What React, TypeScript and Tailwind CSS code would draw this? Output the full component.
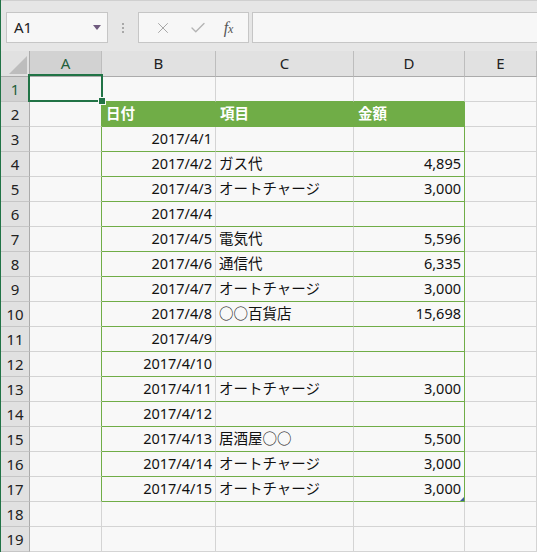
import { X, Check } from 'lucide-react'

const cols = ['A', 'B', 'C', 'D', 'E']

const rows: [string, string, string][] = [
  ['2017/4/1', '', ''],
  ['2017/4/2', 'ガス代', '4,895'],
  ['2017/4/3', 'オートチャージ', '3,000'],
  ['2017/4/4', '', ''],
  ['2017/4/5', '電気代', '5,596'],
  ['2017/4/6', '通信代', '6,335'],
  ['2017/4/7', 'オートチャージ', '3,000'],
  ['2017/4/8', '○○百貨店', '15,698'],
  ['2017/4/9', '', ''],
  ['2017/4/10', '', ''],
  ['2017/4/11', 'オートチャージ', '3,000'],
  ['2017/4/12', '', ''],
  ['2017/4/13', '居酒屋○○', '5,500'],
  ['2017/4/14', 'オートチャージ', '3,000'],
  ['2017/4/15', 'オートチャージ', '3,000'],
]

const font = "font-['Noto_Sans','Noto_Sans_CJK_JP',sans-serif]"

function FormulaBar() {
  return (
    <div className="h-[51px] flex items-start pt-[11px] border-t border-[#d0d0d0]">
      {/* name box */}
      <div className="ml-[5px] w-[102px] h-[31px] border border-[#c6c6c6] bg-[#f7f7f7] flex items-center pl-[7px] pr-[6px]">
        <span className="text-[15px] text-[#222] flex-1">A1</span>
        <svg width="8" height="5" viewBox="0 0 8 5"><path d="M0 0h8L4 5z" fill="#6f5a7e" /></svg>
      </div>
      <div className="w-[30px] h-[31px] flex flex-col items-center justify-center gap-[2px]">
        <span className="w-[2px] h-[2px] bg-[#a8a8a8]" />
        <span className="w-[2px] h-[2px] bg-[#a8a8a8]" />
        <span className="w-[2px] h-[2px] bg-[#a8a8a8]" />
      </div>
      {/* cancel / enter / fx */}
      <div className="w-[111px] h-[31px] border border-[#c6c6c6] bg-[#f7f7f7] flex items-center justify-around px-[6px]">
        <X size={18} strokeWidth={1.3} color="#a6a6a6" />
        <Check size={18} strokeWidth={1.8} color="#b4b4b4" />
        <span className="font-['Liberation_Serif',serif] italic text-[16px] text-[#555] leading-none">
          f<span className="text-[12px]">x</span>
        </span>
      </div>
      <div className="ml-[3px] flex-1 h-[31px] border border-r-0 border-[#c6c6c6] bg-[#f7f7f7]" />
    </div>
  )
}

function cellClass(r: number, c: number) {
  // r: 1-based sheet row, c: 0..4 (A..E)
  const inTable = r >= 2 && r <= 17
  let right = 'border-r-[#d4d4d4]'
  let bottom = 'border-b-[#d4d4d4]'
  let bg = 'bg-[#f8f8f8]'
  if (inTable && c === 0) right = 'border-r-[#70ad47]'
  if (inTable && c === 3) right = 'border-r-[#70ad47]'
  if (r >= 1 && r <= 17 && c >= 1 && c <= 3) bottom = 'border-b-[#70ad47]'
  if (r === 2 && c >= 1 && c <= 3) {
    bg = 'bg-[#70ad47]'
    right = 'border-r-[#70ad47]'
  }
  return `relative h-[25px] border-r border-b ${right} ${bottom} ${bg} flex items-center`
}

export default function App() {
  const sheet: string[][] = []
  for (let r = 1; r <= 19; r++) {
    if (r === 2) sheet.push(['', '日付', '項目', '金額', ''])
    else if (r >= 3 && r <= 17) {
      const [d, item, amt] = rows[r - 3]
      sheet.push(['', d, item, amt, ''])
    } else sheet.push(['', '', '', '', ''])
  }

  return (
    <div className={`relative w-[537px] h-[552px] overflow-hidden bg-[#e6e6e6] border-l border-[#217346] ${font}`}>
      <FormulaBar />

      <div className="grid grid-cols-[29px_72px_114px_138px_111px_1fr]">
        {/* corner */}
        <div className="h-[26px] bg-[#e1e1e1] border-r border-b border-[#ababab] flex items-end justify-end pr-[2px] pb-[2px]">
          <svg width="18" height="18" viewBox="0 0 18 18"><path d="M18 0V18H0z" fill="#bdbdbd" /></svg>
        </div>
        {cols.map((c, i) => (
          <div
            key={c}
            className={`h-[26px] border-r border-b border-r-[#bdbdbd] border-b-[#ababab] flex items-center justify-center text-[15px] ${i === 0 ? 'bg-[#d2d2d2] text-[#1f5f3c]' : 'bg-[#e1e1e1] text-[#222]'}`}
          >
            {c}
          </div>
        ))}

        {sheet.map((cells, ri) => {
          const r = ri + 1
          return [
            <div
              key={`h${r}`}
              className={`h-[25px] border-r border-b border-r-[#ababab] border-b-[#c6c6c6] flex items-center justify-center text-[15px] ${r === 1 ? 'bg-[#d2d2d2] text-[#1f5f3c]' : 'bg-[#e1e1e1] text-[#222]'}`}
            >
              {r}
            </div>,
            ...cells.map((v, c) => (
              <div key={`${r}-${c}`} className={cellClass(r, c)}>
                {r === 2 ? (
                  <span className="pl-[4px] text-[14.5px] font-bold text-white">{v}</span>
                ) : c === 1 || c === 3 ? (
                  <span className="w-full text-right pr-[3px] text-[14.5px] text-[#111]">{v}</span>
                ) : (
                  <span className="pl-[3px] text-[14.5px] text-[#111] whitespace-nowrap">{v}</span>
                )}
                {r === 17 && c === 3 && (
                  <svg className="absolute right-0 bottom-0" width="4" height="4" viewBox="0 0 4 4">
                    <path d="M4 0V4H0z" fill="#3d5c9e" />
                  </svg>
                )}
              </div>
            )),
          ]
        })}
      </div>

      {/* active cell A1 */}
      <div className="absolute left-[27px] top-[74px] w-[75px] h-[28px] border-2 border-[#217346]" />
      <div className="absolute left-[98px] top-[98px] w-[6px] h-[6px] bg-[#217346] outline outline-1 outline-[#f8f8f8]" />
    </div>
  )
}
